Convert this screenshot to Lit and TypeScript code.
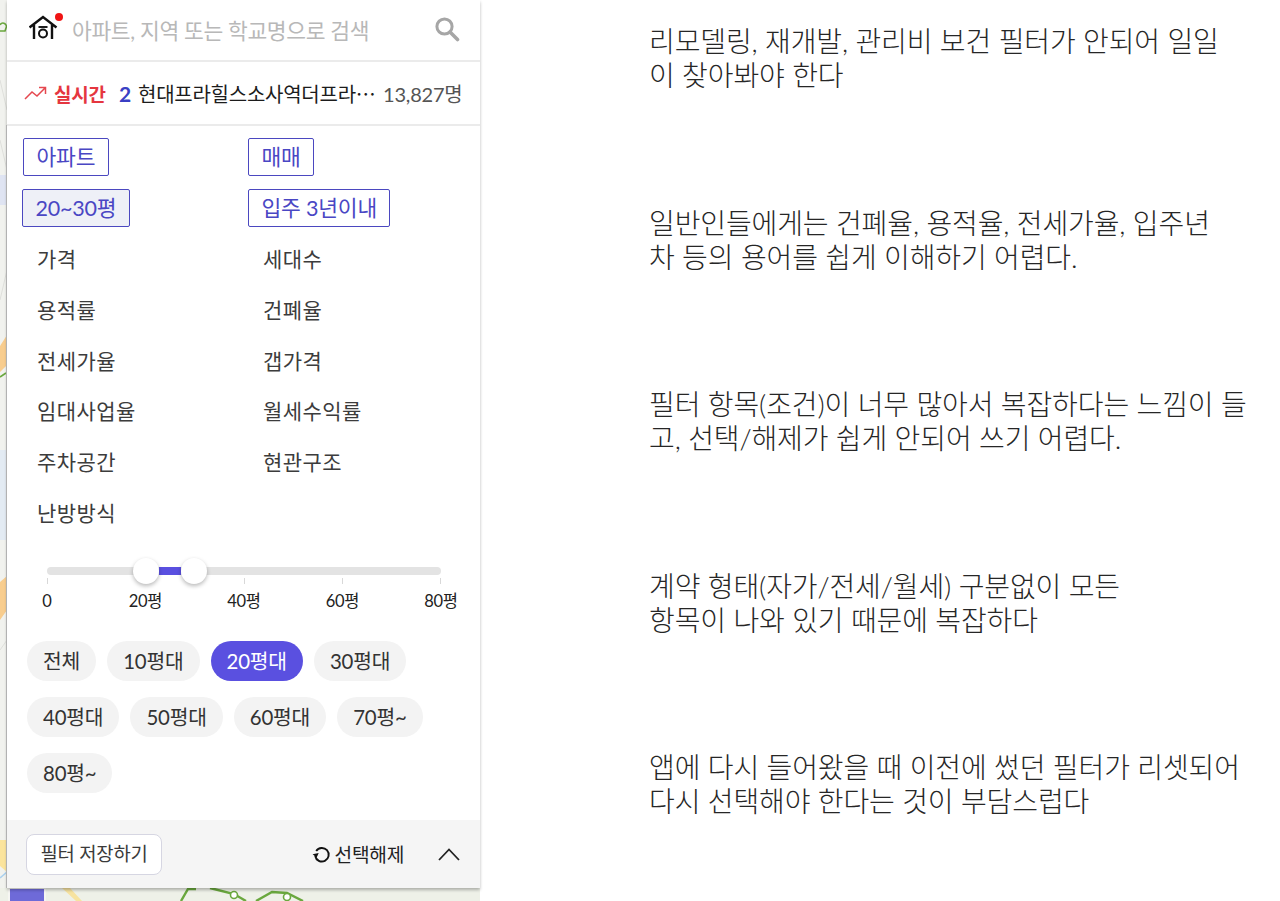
import { LitElement, html, css, svg } from "lit";
import { customElement } from "lit/decorators.js";

const FILTERS = ["가격", "세대수", "용적률", "건폐율", "전세가율", "갭가격", "임대사업율", "월세수익률", "주차공간", "현관구조", "난방방식"];
const PILLS = ["전체", "10평대", "20평대", "30평대", "40평대", "50평대", "60평대", "70평~", "80평~"];
const SCALE = ["0", "20평", "40평", "60평", "80평"];
const NOTES = [
  ["리모델링, 재개발, 관리비 보건 필터가 안되어 일일", "이 찾아봐야 한다"],
  ["일반인들에게는 건폐율, 용적율, 전세가율, 입주년", "차 등의 용어를 쉽게 이해하기 어렵다."],
  ["필터 항목(조건)이 너무 많아서 복잡하다는 느낌이 들", "고, 선택/해제가 쉽게 안되어 쓰기 어렵다."],
  ["계약 형태(자가/전세/월세) 구분없이 모든", "항목이 나와 있기 때문에 복잡하다"],
  ["앱에 다시 들어왔을 때 이전에 썼던 필터가 리셋되어", "다시 선택해야 한다는 것이 부담스럽다"],
];

@customElement("app-root")
export class AppRoot extends LitElement {
  static styles = css`
    :host { display: block; width: 1280px; height: 901px; overflow: hidden; background: #fff; font-family: Lato, "Noto Sans CJK KR", sans-serif; color: #333; }
    .stage { display: flex; height: 901px; }
    .left { position: relative; width: 480px; height: 901px; flex: none; padding: 0 0 13px 7px; box-sizing: border-box; }
    .map { position: absolute; inset: 0; width: 480px; height: 901px; }
    .panel { position: relative; height: 888px; background: #fff; display: flex; flex-direction: column; box-shadow: 0 2px 3px rgba(0,0,0,.28); }
    .search { height: 62px; flex: none; box-sizing: border-box; border-bottom: 2px solid #ebebeb; display: flex; align-items: center; padding: 0 20px 0 22px; }
    .logo { width: 34px; height: 34px; flex: none; margin: -6px 9px 0 0; }
    .ph { flex: 1; font-size: 21.5px; letter-spacing: -.35px; color: #b8b8b8; white-space: nowrap; margin-top: -1px; }
    .mag { width: 26px; height: 26px; flex: none; margin-top: -3px; }
    .hot { height: 64px; flex: none; box-sizing: border-box; border-bottom: 2px solid #ebebeb; display: flex; align-items: center; padding: 0 0 0 17px; font-size: 20px; white-space: nowrap; }
    .trend { width: 23px; height: 14px; flex: none; margin-right: 7px; }
    .live { color: #e5363f; font-weight: 700; font-size: 19px; letter-spacing: -.2px; width: 65px; flex: none; }
    .rank { color: #3a3fc4; font-weight: 700; font-size: 21px; width: 19px; flex: none; }
    .name { color: #1c1c1c; width: 245px; flex: none; letter-spacing: -.25px; overflow: hidden; }
    .count { color: #555; font-size: 20px; letter-spacing: -.2px; }
    .tags { display: grid; grid-template-columns: 225px auto; row-gap: 13px; padding: 12px 0 0 16px; justify-items: start; }
    .tag { display: block; height: 38px; box-sizing: border-box; border: 1.5px solid #4b48c0; border-radius: 2px; padding: 0 12.5px; font-size: 21.5px; line-height: 37px; color: #4a47c4; letter-spacing: -.2px; white-space: nowrap; }
    .tag.on { background: #eef0f7; margin-left: -1px; }
    .filters { display: grid; grid-template-columns: 226px auto; grid-auto-rows: 50.8px; padding: 7px 0 0 30px; font-size: 21px; line-height: 50.8px; letter-spacing: .4px; color: #3c3c3c; }
    .slider { position: relative; margin: 28px 0 0 20px; width: 434px; }
    .track { position: relative; margin: 0 20px; height: 8px; border-radius: 4px; background: #e3e3e3; }
    .fill { position: absolute; left: 112px; width: 22px; top: 0; bottom: 0; background: #5a50e0; }
    .thumb { position: absolute; top: -9px; width: 26px; height: 26px; border-radius: 50%; background: #fff; box-shadow: 0 2px 4px rgba(0,0,0,.28); }
    .ticks { display: flex; justify-content: space-between; margin: 3px 20px 0; height: 6px; }
    .ticks i { width: 1px; height: 6px; background: #d8d8d8; }
    .scale { display: flex; justify-content: space-between; margin-top: 6px; }
    .scale span { width: 40px; display: flex; justify-content: center; font-size: 16.5px; line-height: 22px; color: #222; letter-spacing: -.2px; white-space: nowrap; }
    .pills { display: flex; flex-wrap: wrap; gap: 16px 11px; padding: 29px 40px 0 20px; }
    .pill { height: 40px; padding: 0 16px; border-radius: 20px; background: #f3f3f3; font-size: 20.4px; line-height: 40px; color: #333; letter-spacing: -.2px; white-space: nowrap; }
    .pill.on { background: #5a50e0; color: #fff; }
    .foot { margin-top: auto; height: 68px; flex: none; background: #f5f5f5; display: flex; align-items: center; padding: 0 19px; }
    .save { height: 41px; width: 136px; box-sizing: border-box; border: 1.5px solid #d6d6e2; border-radius: 8px; background: #fff; font-size: 18.8px; line-height: 38px; text-align: center; color: #3a3a3a; letter-spacing: -.2px; white-space: nowrap; }
    .reset { margin-left: auto; display: flex; align-items: center; gap: 4px; font-size: 19.2px; color: #222; letter-spacing: -.3px; }
    .reset svg { width: 19px; height: 19px; }
    .up { width: 24px; height: 14px; margin-left: 33px; }
    .notes { flex: 1; padding: 24px 0 0 169px; font-size: 28px; line-height: 34px; color: #262626; letter-spacing: -.12px; font-weight: 300; white-space: nowrap; }
    .note { height: 68px; margin-bottom: 113.5px; }
  `;

  private mapArt() {
    return svg`
      <rect width="480" height="901" fill="#f1f2ee"/>
      <rect x="0" y="450" width="7" height="90" fill="#e3ebf3"/>
      <path d="M0 346 L7 335 V365 L0 372Z M0 582 L7 576 V610 L0 620Z" fill="#f8cd8e"/>
      <path d="M0 840 H7 V872 L0 866Z" fill="#fbe49c"/>
      <path d="M0 25 a3 3 0 0 1 6 3 l-1 3 h-5" fill="none" stroke="#6aa83e" stroke-width="1.6"/>
      <path d="M0 377 L6 373" stroke="#6aa83e" stroke-width="1.6"/>
      <path d="M0 878 L7 872" stroke="#a9d0ef" stroke-width="1.6"/>
      <path d="M0 80 L7 110 M0 140 L7 170 M0 300 L7 270 M0 650 L7 640" stroke="#dedfdb"/>
      <rect x="0" y="175" width="7" height="30" fill="#dfe4f2"/>
      <rect x="6" y="125" width="1" height="763" fill="#c8c8c8"/>
      <rect x="0" y="888" width="480" height="13" fill="#eef1e8"/>
      <rect x="8" y="888" width="38" height="13" fill="#f6f6f2"/>
      <rect x="10" y="889" width="34" height="12" fill="#6e6ad8"/>
      <path d="M62 888 L76 901 H82 L70 888Z" fill="#f7e3a0"/>
      <path d="M181 901 L188 889 H196 M210 888 L234 894 L246 901 M256 901 L272 892 L287 893 L303 901" fill="none" stroke="#6aa83e" stroke-width="2.4"/>
      <circle cx="234" cy="895" r="3.5" fill="#fff" stroke="#6aa83e" stroke-width="1.6"/>
      <circle cx="287" cy="897" r="3.5" fill="#fff" stroke="#6aa83e" stroke-width="1.6"/>
    `;
  }

  render() {
    return html`
      <div class="stage">
        <div class="left">
          <svg class="map" viewBox="0 0 480 901">${this.mapArt()}</svg>
          <div class="panel">
            <div class="search">
              <svg class="logo" viewBox="0 0 34 34">
                <path d="M0.5 17.5 L14 7 L27.5 17.5 M5 15 V29 M23 15 V29" fill="none" stroke="#111" stroke-width="2.4"/>
                <path d="M9.5 17 H18.5" stroke="#111" stroke-width="1.9"/>
                <circle cx="14" cy="23.5" r="4" fill="none" stroke="#111" stroke-width="2"/>
                <circle cx="30" cy="7" r="4" fill="#f01414"/>
              </svg>
              <div class="ph">아파트, 지역 또는 학교명으로 검색</div>
              <svg class="mag" viewBox="0 0 26 26">
                <circle cx="10.5" cy="10.5" r="7.6" fill="none" stroke="#a6a6a6" stroke-width="3"/>
                <path d="M16 16 L23.5 23.5" stroke="#a6a6a6" stroke-width="3.6" stroke-linecap="round"/>
              </svg>
            </div>
            <div class="hot">
              <svg class="trend" viewBox="0 0 23 14">
                <path d="M1 13 L8 6 L13 10 L21 2 M15 1.5 H21.5 V8" fill="none" stroke="#e5484f" stroke-width="1.5"/>
              </svg>
              <span class="live">실시간</span>
              <span class="rank">2</span>
              <span class="name">현대프라힐스소사역더프라⋯</span>
              <span class="count">13,827명</span>
            </div>
            <div class="tags">
              <div><span class="tag">아파트</span></div>
              <div><span class="tag">매매</span></div>
              <div><span class="tag on">20~30평</span></div>
              <div><span class="tag">입주 3년이내</span></div>
            </div>
            <div class="filters">${FILTERS.map((f) => html`<div>${f}</div>`)}</div>
            <div class="slider">
              <div class="track">
                <div class="fill"></div>
                <div class="thumb" style="left:86px"></div>
                <div class="thumb" style="left:134px"></div>
              </div>
              <div class="ticks">${SCALE.map(() => html`<i></i>`)}</div>
              <div class="scale">${SCALE.map((s) => html`<span>${s}</span>`)}</div>
            </div>
            <div class="pills">
              ${PILLS.map((p) => html`<div class="pill ${p === "20평대" ? "on" : ""}">${p}</div>`)}
            </div>
            <div class="foot">
              <div class="save">필터 저장하기</div>
              <div class="reset">
                <svg viewBox="0 0 19 19">
                  <path d="M4.2 6 A6.8 6.8 0 1 1 3.2 11" fill="none" stroke="#111" stroke-width="1.9"/>
                  <path d="M0.8 8.6 H7 L4.2 12.6Z" fill="#111" transform="rotate(-10 4 10)"/>
                </svg>
                <span>선택해제</span>
              </div>
              <svg class="up" viewBox="0 0 24 14"><path d="M2 13 L12 2.5 L22 13" fill="none" stroke="#222" stroke-width="1.8"/></svg>
            </div>
          </div>
        </div>
        <div class="notes">
          ${NOTES.map((n) => html`<div class="note"><div>${n[0]}</div><div>${n[1]}</div></div>`)}
        </div>
      </div>
    `;
  }
}
